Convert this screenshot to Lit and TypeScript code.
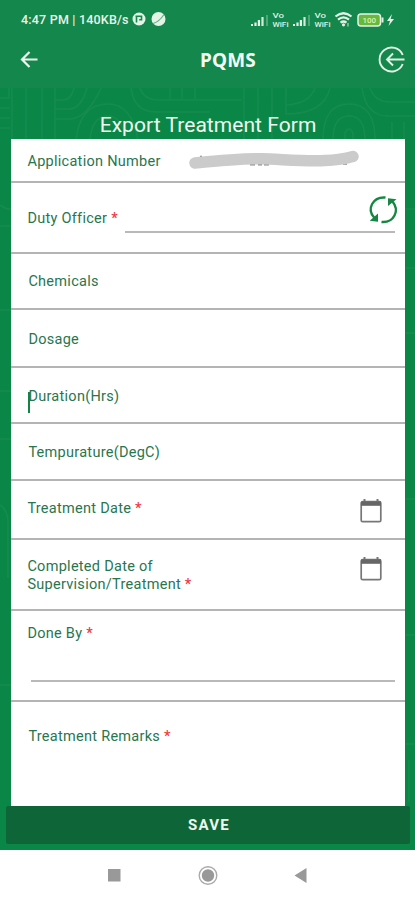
import { LitElement, html, css, svg } from "lit";
import { customElement } from "lit/decorators.js";

const signal = svg`<path d="M0 12.5v-2h2v2zM3.4 12.5V9h2.2v3.5zM6.8 12.5V6.5H9v6z" fill="#e6f3e8"/><path d="M10.4 12.5v-9h2.2v9z" fill="#d5ead9"/><path d="M15 12.5V1.5h2v11z" fill="#4fa676"/>`;

const calendar = html`<svg class="cal" viewBox="0 0 22 24">
  <path d="M4.5 0v4M17.5 0v4" stroke="#777" stroke-width="2"/>
  <rect x="1.2" y="2.7" width="19.6" height="20" rx="1.5" fill="none" stroke="#777" stroke-width="1.7"/>
  <path d="M1 2.5h20v4.3H1z" fill="#666"/>
</svg>`;

@customElement("app-root")
export class AppRoot extends LitElement {
  static styles = css`
    :host { display: block; width: 415px; height: 900px; overflow: hidden; font-family: Roboto, "Noto Sans", sans-serif; }
    * { box-sizing: border-box; }
    svg { display: block; overflow: visible; flex: none; }
    .page { height: 900px; display: flex; flex-direction: column; background: #fff; }
    .top { height: 88px; background: #14874c; flex: none; display: flex; flex-direction: column; }
    .status { height: 36px; padding: 2px 20px 0 21px; display: flex; align-items: center; color: #e8f5ea; font-size: 12.5px; font-weight: 500; }
    .clock { width: 109px; letter-spacing: .2px; white-space: nowrap; }
    .space { flex: 1; }
    .bar { height: 48px; display: grid; grid-template-columns: 60px 1fr 60px; align-items: center; padding: 0 10px 0 20px; }
    .title { color: #f4fbf4; font: 700 19px/24px "Noto Sans", sans-serif; text-align: center; padding-left: 31px; letter-spacing: .2px; }
    .bar svg:last-child { justify-self: end; }
    .body { height: 762px; flex: none; position: relative; background: #0a8747; padding: 24px 10px 0 11px; display: flex; flex-direction: column; }
    .pattern { position: absolute; inset: 0; }
    h1 { margin: 0; height: 27px; position: relative; text-align: center; color: #f0f9ef; font-size: 21px; line-height: 27px; font-weight: 400; letter-spacing: .05px; }
    .card { position: relative; height: 667px; background: #fff; display: flex; flex-direction: column; color: #28764f; font-size: 14.5px; line-height: 18px; letter-spacing: .28px; }
    .row { border-bottom: 2px solid #b4b4b4; padding-left: 16.4px; display: flex; position: relative; flex: none; }
    .row.last { border: 0; }
    .row.in { padding-left: 17.4px; }
    .req { color: #ee3b45; font-weight: 500; }
    .line { height: 2px; background: #b9b9b9; }
    .cal { width: 22px; height: 24px; margin-top: -1px; margin-left: auto; margin-right: 23px; }
    .caret { position: absolute; left: 17px; top: 24px; width: 2px; height: 21px; background: #128542; }
    .save { position: relative; margin: 0 -5px 0 -5px; height: 38px; border-radius: 2px; background: #0e6638; color: #eef8ef; font-weight: 700; font-size: 15px; line-height: 39px; letter-spacing: 1.2px; text-align: center; padding-left: 2px; }
    .nav { height: 50px; display: flex; align-items: center; padding-left: 108px; }
  `;

  render() {
    const req = html`<span class="req">*</span>`;
    return html`<div class="page">
      <div class="top">
        <div class="status">
          <span class="clock">4:47 PM | 140KB/s</span>
          <svg width="36" height="14" viewBox="0 0 36 14" style="margin-left:2px">
            <circle cx="7" cy="7" r="6.500" fill="#e3f3e6"/>
            <path d="M4.500 4v6.500M3.500 4.200h6v3.600H7.200" stroke="#14874c" stroke-width="1.600" fill="none"/>
            <circle cx="26.500" cy="7" r="7" fill="#e3f3e6"/><path d="M21 11.500Q27 10 32 2.500" stroke="#5eac7e" stroke-width="1.100" fill="none"/>
          </svg>
          <span class="space"></span>
          <svg width="145" height="18" viewBox="250 9 145 18" font-family="Roboto" font-weight="500" font-size="7.200" fill="#dff1e3">
            <g transform="translate(251 12.5)">${signal}</g>
            <text x="272.500" y="17" textLength="11.500" lengthAdjust="spacingAndGlyphs">Vo</text><text x="272.500" y="25.600" textLength="16" lengthAdjust="spacingAndGlyphs">WiFi</text>
            <g transform="translate(293 12.5)">${signal}</g>
            <text x="314.500" y="17" textLength="11.500" lengthAdjust="spacingAndGlyphs">Vo</text><text x="314.500" y="25.600" textLength="16" lengthAdjust="spacingAndGlyphs">WiFi</text>
            <g fill="none" stroke="#e3f3e6" stroke-width="2.200"><path d="M335.500 15.500Q343.500 9 351.500 15.500M338 18.700q5.500-4.500 11 0M340.500 21.700q3-2.400 6 0"/></g>
            <circle cx="343.500" cy="23.800" r="1.600"/><path d="M348 22v3.500" stroke="#cbe7d2"/>
            <rect x="358" y="13" width="22.500" height="12" rx="3" fill="#68b83b" stroke="#e3f3e6" stroke-width="1.500"/>
            <path d="M381.500 16.500h2v5h-2z"/><text x="362.500" y="22" font-size="8" fill="#d9f4b5">100</text>
            <path d="M392 13l-5 7h3l-1.500 5 5.500-7h-3.300z"/>
          </svg>
        </div>
        <div class="bar">
          <svg width="18" height="18" viewBox="0 0 18 18"><path d="M9.500 1L2 8.500l7.500 7.500M2 8.500h15.500" fill="none" stroke="#eef8ef" stroke-width="2.200"/></svg>
          <div class="title">PQMS</div>
          <svg width="27" height="27" viewBox="0 0 27 27" style="margin-top:-2px"><path d="M24.700 9A12 12 0 1 0 24.700 18M26.500 13.500H9M15 7.500l-6 6 6 6" fill="none" stroke="#e3f3e6" stroke-width="1.900"/></svg>
        </div>
      </div>
      <div class="body">
        <svg class="pattern" width="415" height="762" viewBox="0 88 415 762" fill="none" stroke="#31985f" stroke-opacity=".3" stroke-width="1.600">
          <path d="M0 98h9v-10M0 108h10M0 118h10M0 128h10M12 88v52M26 88v52M42 88v52M55 88v52M55 109h14q12 0 18-21M55 100h8q8 0 11-12M55 119h14q18 0 32-31M76 140q4-36 32-36 24 0 30 36M90 140q2-24 18-24 14 0 18 24M131 88q3 24 25 24h54M140 88q4 12 18 12h84M170 88v11M182 88v11M195 88v11"/>
          <path d="M244 88v52M258 88v52M272 88v52M286 88v26q38 0 44-26M286 105q23-1 29-17M323 140q0-36 26-36t26 36M333 140q0-24 16-24t16 24M345 140v-7q4-8 8 0v7M362 88q4 28 26 28h27M370 88q5 14 20 14h25M392 122v18M404 122v18"/>
          <path d="M0 205q7 5 11 4M0 226h11M0 310h11M0 391h11M0 439h11M0 505q8 5 8 18v55M0 685h11M405 209h10M405 268h10M405 333h10M405 499h10M405 635h10M405 744h10M409 760v42"/>
        </svg>
        <h1>Export Treatment Form</h1>
        <div class="card">
          <div class="row" style="height:44px;padding-top:14px">Application Number
            <svg width="170" height="22" viewBox="189 148 170 22" style="position:absolute;left:178px;top:9px">
              <path d="M250 164.800h5M258 164.800h4M264 164.800h5M200 156.500h2M343 164h4" stroke="#888" stroke-width="1.500"/>
              <path d="M195 163C215 161 245 158.500 262 158.800S305 161.500 325 160.500S344 158.500 353 156.500" fill="none" stroke="#cbcbcb" stroke-width="11.500" stroke-linecap="round"/>
            </svg></div>
          <div class="row" style="height:71px;padding-top:27px">Duty Officer&nbsp;${req}
            <div class="line" style="position:absolute;left:114px;right:10px;top:48px"></div>
            <svg width="28" height="28" viewBox="0 0 28 28" style="position:absolute;left:358px;top:13px"><g fill="none" stroke="#168743" stroke-width="2.400"><path d="M16.500 1.500C4 .500-3 13 5.500 22"/><path d="M12.500 26C25 27 31 14.500 23.500 5.500"/></g><path d="M9 17.500v8.200l-8.300-.900zM19 10V2.300l8.500.900z" fill="#168743"/></svg>
          </div>
          <div class="row in" style="height:56px;padding-top:19px">Chemicals</div>
          <div class="row in" style="height:58px;padding-top:21px">Dosage</div>
          <div class="row in" style="height:56px;padding-top:20px">Duration(Hrs)<i class="caret"></i></div>
          <div class="row in" style="height:57px;padding-top:20px">Tempurature(DegC)</div>
          <div class="row" style="height:59px;padding-top:19px">Treatment Date&nbsp;${req}${calendar}</div>
          <div class="row" style="height:71px;padding-top:18px"><div>Completed Date of<br>Supervision/Treatment&nbsp;${req}</div>${calendar}</div>
          <div class="row" style="height:91px;padding-top:14px">Done By&nbsp;${req}<div class="line" style="position:absolute;left:20px;right:10px;top:69px"></div></div>
          <div class="row last in" style="height:104px;padding-top:26px">Treatment Remarks&nbsp;${req}</div>
        </div>
        <div class="save">SAVE</div>
      </div>
      <div class="nav">
        <svg width="200" height="22" viewBox="108 864 200 22"><path d="M108 869h12.500v12.500H108zM306.500 868v15L294.500 875.500z" fill="#999"/><circle cx="208" cy="875.500" r="8.800" fill="none" stroke="#aaa" stroke-width="1.400"/><circle cx="208" cy="875.500" r="6.200" fill="#999"/></svg>
      </div>
    </div>`;
  }
}
